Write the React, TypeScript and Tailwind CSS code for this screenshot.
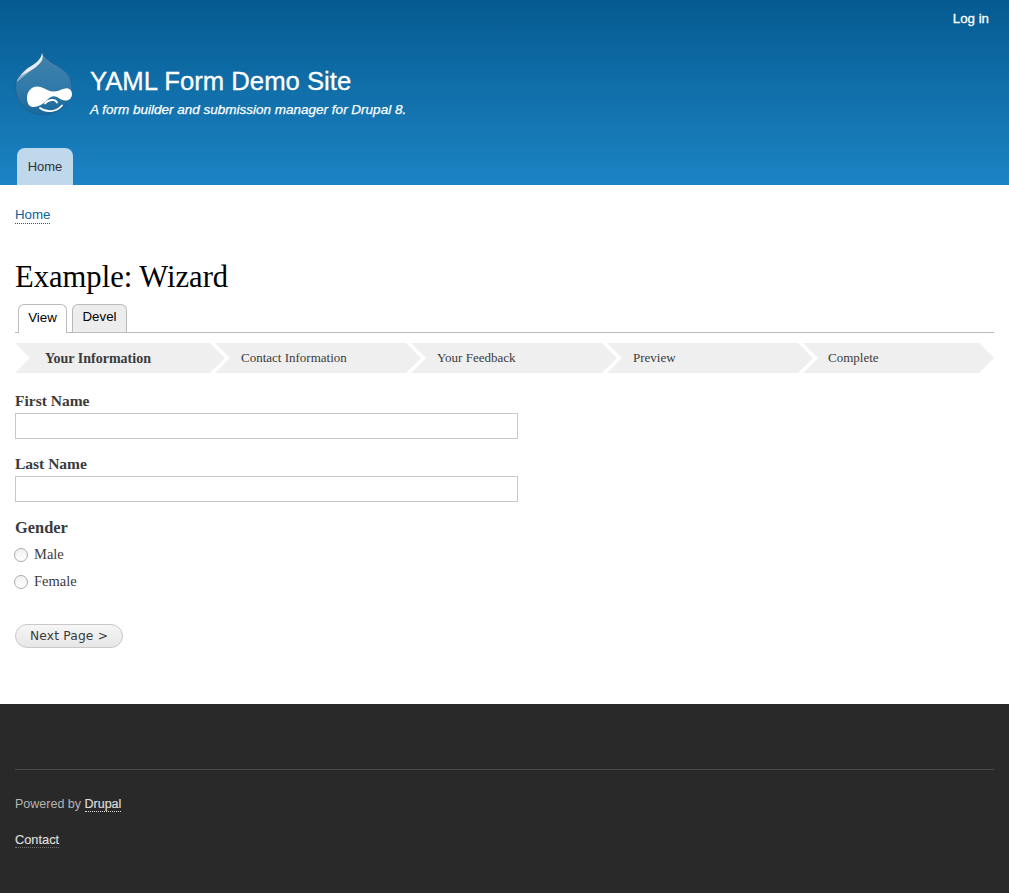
const sans = "font-['Liberation_Sans',Arial,sans-serif]";
const serif = "font-['Liberation_Serif','Times_New_Roman',serif]";

function Logo() {
  return (
    <svg width="58" height="64" viewBox="0 0 58 64" className="block shrink-0">
      <defs>
        <linearGradient id="d" x1="0" y1="0" x2="0" y2="1">
          <stop offset="0" stopColor="#4283ab" />
          <stop offset="0.6" stopColor="#2f79a9" />
          <stop offset="1" stopColor="#1a679c" />
        </linearGradient>
      </defs>
      <path
        d="M27 0.5 C27 6 22 10 15 14 C5 20 0.5 27 0.5 35 C0.5 51 13 63 28.5 63 C44 63 57 51 57 35 C57 20 44 15 36 10 C32 7 28 4 27 0.5 Z"
        fill="url(#d)"
        stroke="#1c6394"
        strokeWidth="1"
      />
      <path d="M5 24 C3 26 2 28 1.5 30 C6 27 9 24 13 21 L16 17 C12 19 8 21 5 24 Z" fill="#8fb4cb" />
      <path d="M27 1 C26 8 20 12 13 16 C9 19 7 22 5 24 C12 20 17 19 22 14 C27 10 29 6 27 1 Z" fill="#e4eef4" />
      <path
        d="M12 46 C12 39 17 34.5 22 34.5 C28 34.5 32 39 38 39.5 C44 40 49 35.5 53 36.5 C58 38 58 44 55 47 C51 50 46 48 42 45 C38 43 35 45 32 48 C28 52 24 55 18 55 C14 55 12 51 12 46 Z"
        fill="#ffffff"
      />
      <path d="M25 56 C31 60.5 41 60.5 47 53.5 M30 51.5 C33 47.5 40 46.5 42 50.5" fill="none" stroke="#ffffff" strokeWidth="1.8" strokeLinecap="round" />
    </svg>
  );
}

function Step({ label, first, last }: { label: string; first?: boolean; last?: boolean }) {
  const width = first ? "w-[210px] pl-[30px] font-bold text-[14px]" : last ? "w-[191px] pl-[25px] text-[13px]" : "w-[206px] pl-[26px] text-[13px]";
  return (
    <div
      className={`${width} ${last ? "" : "mr-[-10px]"} h-[30px] shrink-0 bg-[#efefef] flex items-center text-[#3b3b3b] [clip-path:polygon(0_0,calc(100%-15px)_0,100%_50%,calc(100%-15px)_100%,0_100%,15px_50%)]`}
    >
      {label}
    </div>
  );
}

function Field({ label, className }: { label: string; className: string }) {
  return (
    <div className={className}>
      <div className="h-[20px] leading-[20px] text-[15.5px] font-bold text-[#3b3b3b]">{label}</div>
      <div className="mt-[2px] h-[26px] w-[503px] border border-[#c8c8c8] bg-white" />
    </div>
  );
}

function Radio({ label, className }: { label: string; className: string }) {
  return (
    <div className={`flex items-center h-[20px] ${className}`}>
      <span className="w-[14px] h-[14px] rounded-full border border-[#aaaaaa] bg-gradient-to-b from-[#f0f0f0] to-white" />
      <span className="ml-[6px] text-[14.5px] text-[#3b3b3b]">{label}</span>
    </div>
  );
}

export default function App() {
  return (
    <div className={`w-[1009px] h-[893px] overflow-hidden bg-white flex flex-col ${sans}`}>
      <header className="h-[185px] shrink-0 bg-gradient-to-b from-[#055b91] to-[#1c84c4] px-[15px] flex flex-col">
        <div className="flex justify-end pr-[5px] pt-[11px] h-[52px] shrink-0">
          <span className="text-[13.3px] leading-[16px] text-white [-webkit-text-stroke:0.3px_white]">Log in</span>
        </div>
        <div className="flex h-[85px] shrink-0">
          <Logo />
          <div className="ml-[17px] pt-[13px] text-white">
            <div className="text-[25.7px] leading-[32px] [-webkit-text-stroke:0.3px_white]">YAML Form Demo Site</div>
            <div className="mt-[4px] text-[13.5px] leading-[18px] italic [-webkit-text-stroke:0.25px_white]">
              A form builder and submission manager for Drupal 8.
            </div>
          </div>
        </div>
        <div className="mt-auto flex pl-[2px]">
          <div className="w-[56px] h-[37px] rounded-t-[8px] bg-[#bfd8eb] flex items-center justify-center text-[13px] text-[#333]">
            Home
          </div>
        </div>
      </header>

      <main className="flex-1 px-[15px]">
        <div className="pt-[21px] leading-[18px] text-[13.3px]">
          <span className="text-[#0a62a3] border-b border-dotted border-[#0a62a3] inline-block leading-[16px]">Home</span>
        </div>
        <h1 className={`${serif} mt-[33px] h-[40px] leading-[40px] text-[30.6px] text-black`}>Example: Wizard</h1>

        <div className="h-[29px] mt-[7px] border-b border-[#bbb] flex pl-[3px] gap-[5px] text-[13.3px]">
          <div className="w-[49px] h-[29px] pb-[3px] border border-b-0 border-[#bbb] rounded-t-[6px] bg-white flex items-center justify-center text-[#000]">
            View
          </div>
          <div className="w-[55px] h-[28px] pb-[3px] border border-b-0 border-[#bbb] rounded-t-[6px] bg-[#ededed] flex items-center justify-center text-[#000]">
            Devel
          </div>
        </div>

        <div className={`${serif}`}>
          <div className="mt-[10px] flex">
            <Step first label="Your Information" />
            <Step label="Contact Information" />
            <Step label="Your Feedback" />
            <Step label="Preview" />
            <Step last label="Complete" />
          </div>
          <Field label="First Name" className="mt-[18px]" />
          <Field label="Last Name" className="mt-[15px]" />
          <div className="mt-[16px] h-[20px] leading-[20px] text-[16.4px] font-bold text-[#3b3b3b]">Gender</div>
          <Radio label="Male" className="mt-[7px] -ml-px" />
          <Radio label="Female" className="mt-[7px] -ml-px" />
        </div>

        <button className="mt-[32px] w-[108px] h-[24px] rounded-full border border-[#c8c8c8] bg-gradient-to-b from-[#f6f6f6] to-[#e6e6e6] text-[12.3px] tracking-[0.15px] text-[#3a3a3a] font-['DejaVu_Sans',sans-serif] flex items-center justify-center">
          Next Page &gt;
        </button>
      </main>

      <footer className="h-[189px] shrink-0 bg-[#292929] px-[15px] text-[12.5px] pt-[65px]">
        <div className="border-t border-[#4a4a4a]" />
        <div className="mt-[27px] h-[16px] leading-[14px] text-[#b4b4b4]">
          Powered by{" "}
          <span className="text-[#dcdcdc] border-b border-dotted border-[#dcdcdc] [-webkit-text-stroke:0.2px_#dcdcdc]">Drupal</span>
        </div>
        <div className="mt-[20px] h-[16px] leading-[14px]">
          <span className="text-[#dcdcdc] border-b border-dotted border-[#6f6f6f] text-[12.8px] [-webkit-text-stroke:0.2px_#dcdcdc]">Contact</span>
        </div>
      </footer>
    </div>
  );
}
